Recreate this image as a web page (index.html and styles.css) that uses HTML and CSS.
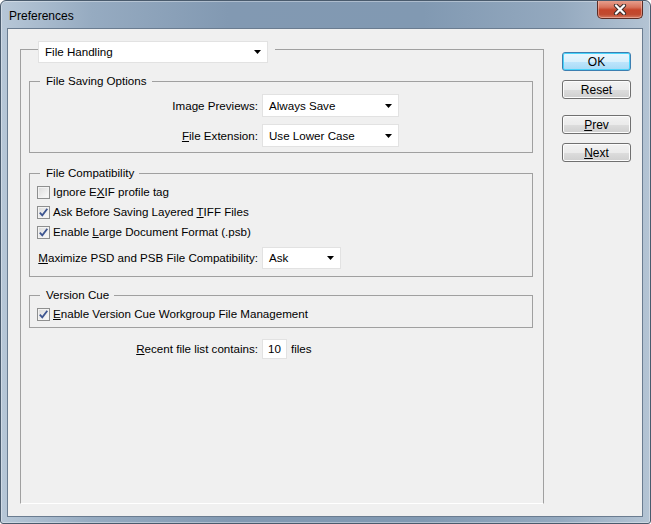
FILE: index.html
```html
<!DOCTYPE html>
<html>
<head>
<meta charset="utf-8">
<title>Preferences</title>
<link rel="stylesheet" href="styles.css">
</head>
<body>
<div class="window">
  <div class="titlebar">
    <span class="title">Preferences</span>
    <div class="close">
      <svg width="14" height="11" viewBox="0 0 14 11">
        <path d="M3 1.5 L11 9.5 M11 1.5 L3 9.5" stroke="#3a2a28" stroke-width="4.2" stroke-linecap="round"/>
        <path d="M3 1.5 L11 9.5 M11 1.5 L3 9.5" stroke="#ffffff" stroke-width="2.3" stroke-linecap="round"/>
      </svg>
    </div>
  </div>
  <div class="client">
    <fieldset class="main">
      <legend class="main-legend">
        <div class="select select-main"><span>File Handling</span><svg class="arrow" width="7" height="4" viewBox="0 0 7 4"><polygon points="0,0 7,0 3.5,4" fill="#000"/></svg></div>
      </legend>

      <fieldset class="group g1">
        <legend>File Saving Options</legend>
        <div class="form-grid g1-grid">
          <label class="lbl">Ima<u>g</u>e Previews:</label>
          <div class="select select-137"><span>Always Save</span><svg class="arrow" width="7" height="4" viewBox="0 0 7 4"><polygon points="0,0 7,0 3.5,4" fill="#000"/></svg></div>
          <label class="lbl"><u>F</u>ile Extension:</label>
          <div class="select select-137"><span>Use Lower Case</span><svg class="arrow" width="7" height="4" viewBox="0 0 7 4"><polygon points="0,0 7,0 3.5,4" fill="#000"/></svg></div>
        </div>
      </fieldset>

      <fieldset class="group g2">
        <legend>File Compatibility</legend>
        <div class="check-row"><span class="cb"></span><span>Ignore E<u>X</u>IF profile tag</span></div>
        <div class="check-row"><span class="cb"><svg width="11" height="11" viewBox="0 0 11 11"><path d="M1.8 5.6 L4.3 8.4 L9.3 1.8" fill="none" stroke="#3d5590" stroke-width="1.8"/></svg></span><span>Ask Before Saving Layered <u>T</u>IFF Files</span></div>
        <div class="check-row"><span class="cb"><svg width="11" height="11" viewBox="0 0 11 11"><path d="M1.8 5.6 L4.3 8.4 L9.3 1.8" fill="none" stroke="#3d5590" stroke-width="1.8"/></svg></span><span>Enable <u>L</u>arge Document Format (.psb)</span></div>
        <div class="form-grid g2-grid">
          <label class="lbl lbl-left"><u>M</u>aximize PSD and PSB File Compatibility:</label>
          <div class="select select-79"><span>Ask</span><svg class="arrow" width="7" height="4" viewBox="0 0 7 4"><polygon points="0,0 7,0 3.5,4" fill="#000"/></svg></div>
        </div>
      </fieldset>

      <fieldset class="group g3">
        <legend>Version Cue</legend>
        <div class="check-row"><span class="cb"><svg width="11" height="11" viewBox="0 0 11 11"><path d="M1.8 5.6 L4.3 8.4 L9.3 1.8" fill="none" stroke="#3d5590" stroke-width="1.8"/></svg></span><span><u>E</u>nable Version Cue Workgroup File Management</span></div>
      </fieldset>

      <div class="recent">
        <label class="lbl"><u>R</u>ecent file list contains:</label>
        <div class="num">10</div>
        <span>files</span>
      </div>
    </fieldset>

    <div class="buttons">
      <div class="btn btn-default">OK</div>
      <div class="btn">Reset</div>
      <div class="btn btn-gap"><u>P</u>rev</div>
      <div class="btn"><u>N</u>ext</div>
    </div>
  </div>
</div>
</body>
</html>
```

FILE: styles.css
```css
* { box-sizing: border-box; }

html, body {
  margin: 0;
  padding: 0;
  background: #ffffff;
}

body {
  font-family: "Liberation Sans", Arial, sans-serif;
  font-size: 11.6px;
  line-height: 14px;
  color: #000;
}

.window {
  width: 651px;
  height: 524px;
  display: flex;
  flex-direction: column;
  border: 1px solid #4a5b6d;
  border-radius: 6px 6px 3px 3px;
  background: linear-gradient(to right, #b7c7d7 0%, #96abc1 14%, #8299b2 35%, #8199b2 65%, #94a9bf 86%, #b4c4d4 100%);
  box-shadow: inset 0 0 0 1px rgba(255, 255, 255, 0.35);
  overflow: hidden;
}

.titlebar {
  height: 27px;
  flex: none;
  display: flex;
  align-items: flex-start;
  justify-content: space-between;
  padding: 0 7px 0 8px;
}

.title {
  font-family: "Liberation Sans", Arial, sans-serif;
  font-size: 12px;
  line-height: 14px;
  margin-top: 8px;
  color: #000;
}

.close {
  width: 46px;
  height: 19px;
  margin-top: -1px;
  display: flex;
  align-items: center;
  justify-content: center;
  border: 1px solid #5b2c25;
  border-top: none;
  border-radius: 0 0 5px 5px;
  background: linear-gradient(#e9a594 0%, #d8735c 40%, #c5452b 55%, #c04a30 80%, #d37a62 100%);
  box-shadow: inset 0 0 0 1px rgba(255, 210, 200, 0.45);
}

.close svg { display: block; margin-top: 1px; }

.client {
  flex: 1;
  margin: 0 7px 6px 6px;
  border: 1px solid #6a7c90;
  background: #f0f0f0;
  display: flex;
  align-items: stretch;
  padding: 6px 0 12px 12px;
}

fieldset {
  margin: 0;
  padding: 0;
  min-width: 0;
}

.main {
  width: 524px;
  border: 1px solid #a0a0a0;
  border-bottom-color: #ffffff;
}

.main-legend {
  margin-left: 17px;
  padding: 6px 7px 0 0;
}

.select {
  display: flex;
  align-items: center;
  justify-content: space-between;
  height: 23px;
  background: #ffffff;
  border: 1px solid #e2e2e2;
  padding: 0 6px 0 6px;
}

.select-main {
  width: 230px;
  height: 22px;
  padding-left: 6px;
}

.select-137 { width: 137px; }
.select-79 { width: 79px; height: 22px; }

.arrow { display: block; flex: none; }

.group {
  margin: 11px 10px 0 8px;
  border: 1px solid #a0a0a0;
}

.group legend {
  margin-left: 10px;
  padding: 0 5px 0 6px;
  line-height: 14px;
}

.g1 { padding: 6px 0 5px 0; }
.g2 { margin-top: 13px; padding: 2px 0 7px 0; }
.g3 { margin-top: 11px; padding: 2px 0 3px 0; }

.form-grid {
  display: grid;
  grid-template-columns: 228px auto;
  column-gap: 4px;
  align-items: center;
  justify-content: start;
}

.g1-grid { row-gap: 7px; }
.g2-grid { margin-top: 5px; }

.lbl {
  text-align: right;
  white-space: nowrap;
}

.check-row {
  height: 20px;
  display: flex;
  align-items: center;
  padding-left: 7px;
  gap: 3px;
}

.cb {
  width: 13px;
  height: 13px;
  flex: none;
  border: 1px solid #8e8f8f;
  background: linear-gradient(135deg, #d9d9d9 0%, #ededed 55%, #fbfbfb 100%);
  box-shadow: inset 0 0 0 1px #f3f3f3;
  display: flex;
  align-items: center;
  justify-content: center;
}

.cb svg { display: block; }

.recent {
  margin-top: 11px;
  display: grid;
  grid-template-columns: 237px 25px auto;
  column-gap: 4px;
  align-items: center;
  justify-content: start;
}

.num {
  width: 25px;
  height: 20px;
  background: #ffffff;
  border: 1px solid #e2e2e2;
  display: flex;
  align-items: center;
  justify-content: center;
}

.buttons {
  margin-left: 18px;
  width: 69px;
  padding-top: 17px;
  display: flex;
  flex-direction: column;
  gap: 9px;
}

.btn {
  height: 19px;
  border: 1px solid #707070;
  border-radius: 3px;
  background: linear-gradient(#f2f2f2 0%, #ebebeb 50%, #dddddd 51%, #cfcfcf 100%);
  box-shadow: inset 0 0 0 1px #fcfcfc;
  display: flex;
  align-items: center;
  justify-content: center;
  font-size: 12px;
}

.btn-default {
  border-color: #3c7fb1;
  background: linear-gradient(#eaf6fd 0%, #d9f0fc 50%, #bee6fd 51%, #a7d9f5 100%);
  box-shadow: inset 0 0 0 1px #48d4fb;
}

.btn-gap { margin-top: 7px; }

u { text-decoration: underline; text-underline-offset: 1px; }
```
